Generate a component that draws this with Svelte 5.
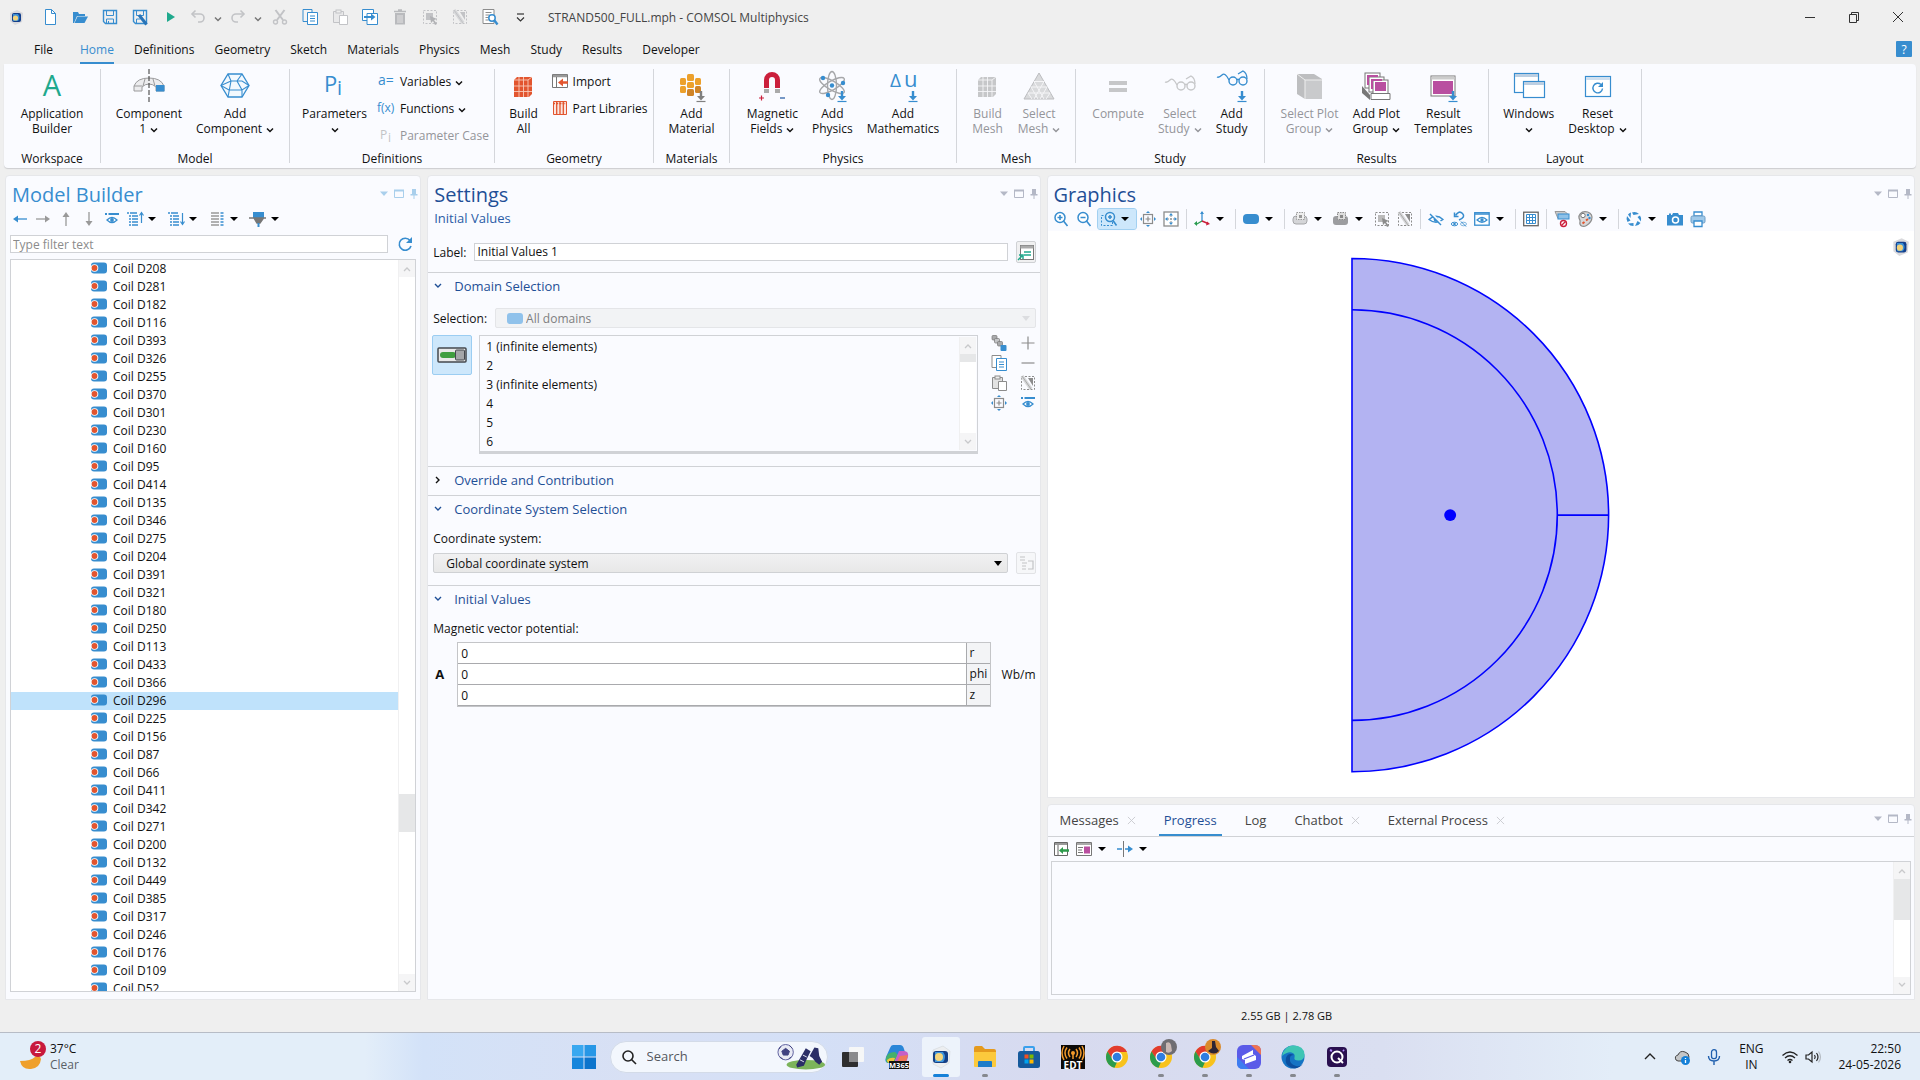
<script lang="ts">
	const B = '#378dcf';
	const G = '#8c8c8c';
	const L = '#c2c3c6';

	// 16x16 toolbar icons
	const icons: Record<string, string> = {
		logo: `<path d="M2 4 L9 1 L15 4 L14 13 L7 16 L2 12Z" fill="#d9d9dc"/><rect x="4" y="4" width="9" height="9" rx="2" fill="#123f8c"/><path d="M5 5h5q3 3.500 0 7H5z" fill="#3b8fd6"/><circle cx="7.500" cy="9" r="2.600" fill="#f3d37a"/>`,
		new: `<path d="M3.5.5h6l4 4v11h-10z" fill="#fff" stroke="${B}"/><path d="M9.5.5v4h4" fill="none" stroke="${B}"/>`,
		open: `<path d="M1 14V3h5l1 2h6v2H5L2 14z" fill="${B}"/><path d="M5.500 7.500H16L12.500 14H2.500z" fill="${B}"/>`,
		save: `<path d="M1.500 1.500h13v13h-11l-2-2z" fill="none" stroke="${B}" stroke-width="1.400"/><path d="M4.500 1.500v5h7v-5M4.500 14v-4h7v4M6.500 12v2" fill="none" stroke="${B}"/>`,
		saveas: `<path d="M1.500 1.500h13v13h-11l-2-2z" fill="none" stroke="${B}" stroke-width="1.400"/><path d="M4.500 1.500v5h7v-5M4.500 14v-4h4" fill="none" stroke="${B}"/><path d="M7 6l7.500 9.500" stroke="#2874b8" stroke-width="3"/>`,
		play: `<path d="M5 3l8 5-8 5z" fill="#1fa98d"/>`,
		undo: `<path d="M2 5h8a4 4 0 010 8H8" fill="none" stroke="${L}" stroke-width="1.600"/><path d="M5.500 1.500L2 5l3.500 3.500" fill="none" stroke="${L}" stroke-width="1.600"/>`,
		redo: `<path d="M14 5H6a4 4 0 000 8h2" fill="none" stroke="${L}" stroke-width="1.600"/><path d="M10.500 1.500L14 5l-3.500 3.500" fill="none" stroke="${L}" stroke-width="1.600"/>`,
		cut: `<path d="M3.500 1L11 11M12.500 1L5 11" stroke="${L}" stroke-width="2"/><circle cx="3.500" cy="13" r="2" fill="none" stroke="${L}" stroke-width="1.400"/><circle cx="12.500" cy="13" r="2" fill="none" stroke="${L}" stroke-width="1.400"/>`,
		copy: `<path d="M1 .5h9v12H1z" fill="#f4f4f4" stroke="${B}"/><path d="M5.500 3.500h10v12h-10z" fill="#fff" stroke="${B}"/><path d="M8 7h5M8 9.500h5M8 12h5" stroke="${B}" stroke-width="1.200"/>`,
		copyg: `<path d="M1 .5h9v12H1z" fill="#fff" stroke="${G}"/><path d="M5.500 3.500h10v12h-10z" fill="#fff" stroke="${B}"/><path d="M8 7h5M8 9.500h5M8 12h5" stroke="${B}" stroke-width="1.200"/>`,
		paste: `<path d="M1.500 2.500h10v11h-10z" fill="#e9e9ea" stroke="${L}"/><rect x="4" y="1" width="5" height="3" fill="#eee" stroke="${L}"/><path d="M7.500 6.500h8v9h-8z" fill="#fff" stroke="${L}"/>`,
		pasteg: `<path d="M1.500 2.500h10v11h-10z" fill="#e2e2e2" stroke="${G}"/><rect x="4" y="1" width="5" height="3" fill="#eee" stroke="${G}"/><path d="M7.500 6.500h8v9h-8z" fill="#fff" stroke="${G}"/>`,
		dup: `<path d="M.5.500h11v11H.5z" fill="#fff" stroke="${B}"/><path d="M5 4.500h10.500v11H5z" fill="#fff" stroke="${B}"/><path d="M2 8h8" stroke="${B}" stroke-width="2"/><path d="M9 4.500L13.500 8 9 11.500z" fill="${B}"/>`,
		trash: `<path d="M3 4h10v11.500H3z" fill="#b9babd"/><path d="M2 2.500h12M6 1h4" stroke="#b9babd" stroke-width="1.500"/><path d="M6 6v8M8 6v8M10 6v8" stroke="#eee" stroke-width=".8"/>`,
		sel: `<rect x="1.500" y="1.500" width="13" height="13" fill="none" stroke="${L}" stroke-dasharray="2 1.500"/><rect x="4" y="4" width="7" height="7" fill="${L}"/><path d="M8 7l7 3-3 1 3 4-2 1-2-4-2 2z" fill="#b0b1b4"/>`,
		selg: `<rect x="1.500" y="1.500" width="13" height="13" fill="none" stroke="${G}" stroke-dasharray="2 1.500"/><rect x="4" y="4" width="7" height="7" fill="#bbb"/><path d="M8 7l7 3-3 1 3 4-2 1-2-4-2 2z" fill="${G}"/>`,
		desel: `<rect x="1.500" y="1.500" width="13" height="13" fill="none" stroke="${L}" stroke-dasharray="2 1.500"/><path d="M8 3h5v8z" fill="${L}"/><path d="M2 1l9 13" stroke="#d6d7d9" stroke-width="3.500"/><path d="M2 1l9 13" stroke="${L}"/>`,
		deselg: `<rect x="1.500" y="1.500" width="13" height="13" fill="none" stroke="${G}" stroke-dasharray="2 1.500"/><path d="M8 3h5v8z" fill="${G}"/><path d="M2 1l9 13" stroke="#d6d7d9" stroke-width="3.500"/><path d="M2 1l9 13" stroke="#aaa"/>`,
		find: `<path d="M1 .5h11v14H1z" fill="#fff" stroke="${G}"/><path d="M3.500 3.500h6M3.500 6h4M3.500 8.500h3M3.500 11h3" stroke="${G}"/><circle cx="10" cy="9" r="3.200" fill="#fff" stroke="${B}" stroke-width="1.500"/><path d="M12.500 11.500l3 4" stroke="${B}" stroke-width="2.400"/>`,
		more: `<path d="M5 5h7" stroke="#333" stroke-width="1.200"/><path d="M5 8.500l3.500 3.500L12 8.500" fill="none" stroke="#333" stroke-width="1.200"/>`,
		left: `<path d="M15 8H4" stroke="${B}" stroke-width="1.300"/><path d="M6 4.500v7L1 8z" fill="${B}"/>`,
		right: `<path d="M1 8h11" stroke="#999" stroke-width="1.300"/><path d="M10 4.500v7l5-3.500z" fill="#999"/>`,
		up: `<path d="M8 15V4" stroke="#999" stroke-width="1.300"/><path d="M4.500 6h7L8 1z" fill="#999"/>`,
		down: `<path d="M8 1v11" stroke="#999" stroke-width="1.300"/><path d="M4.500 10h7L8 15z" fill="#999"/>`,
		eye: `<path d="M1 3h2M4.500 3H15" stroke="${B}" stroke-width="2"/><path d="M3 9q5-5 10 0-5 5-10 0z" fill="#fff" stroke="${B}" stroke-width="1.300"/><circle cx="8" cy="9" r="1.900" fill="${B}"/>`,
		listup: `<path d="M0 2h10M2 5h9M2 8h9M2 11h9M2 14h9" stroke="${B}" stroke-width="1.300" stroke-dasharray="2 1 9"/><path d="M14.500 12V2M12.500 4.500l2-3 2 3" fill="none" stroke="${B}" stroke-width="1.200"/>`,
		listdown: `<path d="M0 2h10M2 5h9M2 8h9M2 11h9M2 14h9" stroke="${B}" stroke-width="1.300" stroke-dasharray="2 1 9"/><path d="M14.500 2v11M12.500 10.500l2 3 2-3" fill="none" stroke="${B}" stroke-width="1.200"/>`,
		cols: `<path d="M2 2h8M2 5h8M2 8h8M2 11h8M2 14h8" stroke="#999" stroke-width="1.300"/><path d="M11.500 2h3M11.500 5h3M11.500 8h3M11.500 11h3M11.500 14h3" stroke="${B}" stroke-width="1.500"/>`,
		funnel: `<path d="M3 1h11v6H3z" fill="${B}"/><path d="M-1 7h17M4 7h9.500L10 12H7z" fill="#777" stroke="#777" stroke-width="1.500"/><path d="M8.500 12v4" stroke="${B}" stroke-width="2"/>`,
		refresh: `<path d="M13 4.500A6 6 0 1014 10" fill="none" stroke="${B}" stroke-width="1.600"/><path d="M15 1v6H9z" fill="${B}"/>`,
		coil: `<rect x="0" y="2.500" width="16" height="11" rx="3" fill="${B}"/><circle cx="3.500" cy="8" r="3.800" fill="#fff"/><circle cx="3.500" cy="8" r="2.900" fill="#e2552f"/>`,
		zoomin: `<circle cx="7" cy="6.500" r="5" fill="#fff" stroke="${B}" stroke-width="1.500"/><path d="M4.500 6.500h5M7 4v5M10.500 10l4 5" stroke="${B}" stroke-width="1.600"/>`,
		zoomout: `<circle cx="7" cy="6.500" r="5" fill="#fff" stroke="${B}" stroke-width="1.500"/><path d="M4.500 6.500h5M10.500 10l4 5" stroke="${B}" stroke-width="1.600"/>`,
		zoombox: `<rect x=".5" y="4.500" width="11" height="10" fill="none" stroke="${B}" stroke-dasharray="2 1.500"/><circle cx="9" cy="6" r="4.500" fill="#dceefb" stroke="${B}" stroke-width="1.500"/><path d="M7 6h4M9 4v4M12 9.500l3.500 5" stroke="${B}" stroke-width="1.600"/>`,
		center: `<rect x="3.500" y="3.500" width="9" height="9" fill="none" stroke="${G}" stroke-width="1.200"/><path d="M8 5.500v5M5.500 8h5" stroke="${G}" stroke-width="1.200"/><path d="M8 0l2 2H6zM8 16l2-2H6zM0 8l2-2v4zM16 8l-2-2v4z" fill="${B}"/>`,
		extents: `<rect x="1" y="1" width="14" height="14" fill="#fff" stroke="${G}" stroke-width="1.300"/><path d="M8 4v8M4 8h8" stroke="${G}" stroke-dasharray="2 1"/><path d="M8 2l2 2.500H6zM8 14l2-2.500H6zM2 8l2.500-2v4zM14 8l-2.500-2v4z" fill="${B}"/>`,
		axes: `<path d="M8 1v9" stroke="${B}" stroke-width="1.300"/><path d="M8 10l-6 3.500" stroke="#2a9c50" stroke-width="1.400"/><path d="M8 10l6 2.500" stroke="#cb1f3b" stroke-width="1.400"/><path d="M8 0l2 3H6z" fill="${B}"/><path d="M0 12.500l3-2.500v5z" fill="#2a9c50"/><path d="M16 13l-4 1.500 1-4z" fill="#cb1f3b"/>`,
		blob: `<rect x="0" y="3" width="16" height="10" rx="4" fill="${B}"/>`,
		select1: `<rect x="1" y="5" width="14" height="8" rx="3" fill="#d4d5d8" stroke="#a5a6a9"/><rect x="4.500" y="1.500" width="8" height="7" fill="#eee" stroke="#999" stroke-dasharray="1.500 1"/><rect x="7" y="4" width="3" height="3" fill="#999"/>`,
		select2: `<rect x="0" y="5" width="15" height="9" rx="3" fill="#9c9da0"/><rect x="4.500" y="1.500" width="8" height="7" fill="#ddd" stroke="#888" stroke-dasharray="1.500 1"/><rect x="7" y="4" width="3" height="3" fill="#888"/>`,
		hide: `<path d="M1 8.500q7-6.500 14 0-7 5.500-14 0z" fill="none" stroke="${B}" stroke-width="1.300"/><circle cx="8" cy="8.500" r="2.300" fill="${B}"/><path d="M3.500 2.500l11 11" stroke="#fafbff" stroke-width="2"/><path d="M2 3l11 11" stroke="${B}" stroke-width="1.400"/>`,
		reset: `<path d="M3.500 1.500v4h4" fill="none" stroke="${B}" stroke-width="1.500"/><path d="M4.500 4.500Q8-1 11.500 2.500T8 9" fill="none" stroke="${B}" stroke-width="1.600"/><ellipse cx="3.500" cy="13" rx="3.200" ry="1.800" fill="none" stroke="${B}"/><circle cx="3.500" cy="13" r="1.300" fill="${B}"/><ellipse cx="12.500" cy="13" rx="3" ry="1.800" fill="none" stroke="#7fb4de"/><path d="M10 10.500l5 5" stroke="${B}"/>`,
		view: `<rect x=".700" y="1.700" width="14.500" height="12.500" fill="#fff" stroke="${B}" stroke-width="1.300"/><path d="M1 3h14" stroke="${B}" stroke-width="1.500"/><path d="M3 9q5-5 10 0-5 4.500-10 0z" fill="none" stroke="${B}" stroke-width="1.200"/><circle cx="8" cy="9" r="1.700" fill="${B}"/>`,
		grid: `<rect x=".700" y="1.200" width="14.500" height="13.500" fill="#fff" stroke="#666" stroke-width="1.300"/><path d="M3.500 3.500h9v9h-9zM3.500 6.500h9M3.500 9.500h9M6.500 3.500v9M9.500 3.500v9" fill="none" stroke="${B}"/>`,
		noclip: `<path d="M1 .5h10l3 3v4H4z" fill="#c9cacc" stroke="#999"/><rect x="4" y="3" width="11" height="5" fill="#8ec1e8" stroke="${B}"/><circle cx="9.500" cy="12.500" r="3" fill="#fff" stroke="#cb1f3b" stroke-width="1.400"/><path d="M7.500 14.500l4-4" stroke="#cb1f3b" stroke-width="1.300"/>`,
		palette: `<path d="M8 .700c-4 0-6.500 3-6 6.300.5 2 1.500 2 1 4-1 4 3 5.500 6.500 3.500S15 9 15 6 12 .700 8 .700z" fill="#d7d7d9" stroke="${G}" stroke-width="1.200"/><circle cx="6" cy="4.500" r="2.200" fill="#fff" stroke="#777"/><circle cx="11" cy="4" r="1.200" fill="${B}"/><circle cx="12.500" cy="7" r="1.200" fill="${B}"/><path d="M5.500 12.500l2-1.500M9 9.500l2-1.500" stroke="#e2552f" stroke-width="2"/>`,
		aperture: `<path d="M6 1.500A7 7 0 0113 3l-5.500 1zM14 4.500a7 7 0 011 6l-3.500-4.500zM14.500 12a7 7 0 01-5.500 3l2.500-5zM7.500 15A7 7 0 012 12.500l5.500-.5zM1.500 11a7 7 0 01-.5-6l3.500 4.500zM2 3.500A7 7 0 015 1.500L4.500 7z" fill="${B}"/>`,
		camera: `<path d="M0 4h2V2.500h2V4h1l1-2h5l1 2h4v10.500H0z" fill="${B}"/><circle cx="8.500" cy="9" r="3" fill="${B}" stroke="#fff" stroke-width="1.500"/>`,
		printer: `<path d="M4 1h8v4H4z" fill="#fff" stroke="${B}" stroke-width="1.300"/><rect x="1" y="5" width="14" height="7" rx="1.500" fill="#9fc9ea" stroke="#6d9cc4"/><path d="M4 10h8v5.500H4z" fill="#fff" stroke="${B}" stroke-width="1.300"/>`,
		chain: `<g stroke="#777" stroke-width=".700"><rect x="1" y=".5" width="5" height="4.500" rx="1" fill="#a9aaac"/><rect x="3.500" y="3.500" width="5" height="4.500" rx="1" fill="#c3c4c6"/><rect x="6.500" y="6.500" width="5" height="4.500" rx="1" fill="#a9aaac"/></g><rect x="9.500" y="10" width="6" height="6" rx="1" fill="${B}"/>`,
		plus: `<path d="M8 1.500v13M1.500 8h13" stroke="${G}" stroke-width="1.200"/>`,
		minus: `<path d="M1.500 8h13" stroke="${G}" stroke-width="1.200"/>`,
		form: `<rect x="2.500" y="1.500" width="13" height="14" fill="#fff" stroke="#777"/><path d="M2.500 3h13" stroke="#aaa" stroke-width="3"/><path d="M6 8h7M6 11h7" stroke="#1fa98d" stroke-width="1.300"/><path d="M0 16l4-4M1 11h4v4" stroke="#1fa98d" fill="none" stroke-width="1.500"/>`,
		gotosrc: `<path d="M2 2h5M2 5h5M4 8h5M4 11h4M4 14h4M10 6h5v8h-5" fill="none" stroke="${L}" stroke-width="1.200"/>`,
		msg1: `<path d="M1.500 1.500h13v13h-13z" fill="#fff" stroke="#666"/><path d="M2 3h12" stroke="#999" stroke-width="2"/><path d="M5 4v10" stroke="#666"/><path d="M16 9.500H9" stroke="#2c9a4b" stroke-width="2.500"/><path d="M6 9.500L10 6v7z" fill="#2c9a4b"/>`,
		msg2: `<path d="M.5 1.500h15v13H.5z" fill="#fff" stroke="#777"/><path d="M1 3h14" stroke="#aaa" stroke-width="2"/><path d="M2 6.500h5M2 9h4M2 11.500h5" stroke="#777"/><rect x="8" y="5.500" width="6" height="7" fill="#b94fa0"/>`,
		msg3: `<path d="M6.500 0v16" stroke="#777"/><path d="M0 8h5M8 8h5" stroke="${B}" stroke-width="1.400"/><path d="M11 4.500v7l5-3.500z" fill="${B}"/>`,
		import: `<path d="M.5 1.500h15v13H.5z" fill="#fff" stroke="#777"/><path d="M1 3h14" stroke="#999" stroke-width="2.500"/><path d="M4.500 4v10" stroke="#777"/><path d="M16 9.500h-6" stroke="#e2552f" stroke-width="2.500"/><path d="M6 9.500L11 5.500v8z" fill="#e2552f"/>`,
		parts: `<path d="M1.500 1.500h13v13h-13z" fill="#fbe6e0" stroke="#e2552f"/><path d="M4.700 1v14M8 1v14M11.300 1v14" stroke="#e2552f" stroke-width="1.300"/><path d="M1 3.500h14" stroke="#e2552f" stroke-dasharray="2 1.200" stroke-width="1.500"/>`,
		vars: `<text x="-1" y="12" font-size="14" fill="${B}">a=</text>`,
		funcs: `<text x="-2" y="12" font-size="12" fill="${B}">f(x)</text>`,
		pcase: `<text x="1" y="12" font-size="12" fill="${L}">P</text><text x="9" y="15" font-size="12" fill="${L}">i</text>`
	};

	const downArrow = (c: string) => `<path d="M26 22v7" stroke="${c}" stroke-width="2.400"/><path d="M22 27h8l-4 4.500z" fill="${c}"/><path d="M21.500 32.500h9" stroke="${c}" stroke-width="1.200"/>`;
	const cube = (c: string, s: string) => `<path d="M6 11l3-3h15v17l-3 3H6z" fill="${c}"/><path d="M6 11h14v17M20 11l4-3M11 8v20M15.500 8v20M6 17h18M6 22.500h18" fill="none" stroke="${s}" stroke-width=".9"/>`;
	const glasses = (c: string) => `<circle cx="17" cy="17" r="4" fill="none" stroke="${c}" stroke-width="1.400"/><circle cx="27" cy="17" r="4" fill="none" stroke="${c}" stroke-width="1.400"/><path d="M21 16q1-1.500 2 0M13 16Q9 8 6 11t-5 2M31 15q0-6-4-8l-5 3" fill="none" stroke="${c}" stroke-width="1.300"/>`;

	// 32x34 ribbon icons
	const bigIcons: Record<string, string> = {
		app: `<text x="16" y="27" font-size="29" text-anchor="middle" fill="#1fa98d">A</text>`,
		comp: `<path d="M1 21v-4Q4 9 16 9t15 8v5h-8v-4q-3-3-7-3t-7 3v4H1z" fill="#ececee" stroke="#9a9a9c"/><path d="M1 17h8M12 10l-2 7M20 10l2 7" stroke="#9a9a9c" fill="none"/><rect x="23" y="16" width="8.500" height="6.500" fill="${B}"/><path d="M16 0v33" stroke="#333" stroke-dasharray="5 2"/>`,
		addcomp: `<path d="M9 5h14l7 11.500L23 28H9L2 16.500z" fill="#f3f9fe" stroke="${B}" stroke-width="1.300"/><path d="M9 5l3 7h11l7 4.500M12 12L2 16.500M12 12l-3 16M23 5l-5 7 5 9v7M2 16.500l8 4.500h13l7-4.500" fill="none" stroke="${B}" stroke-width="1.100"/>`,
		params: `<text x="6" y="23" font-size="22" fill="${B}">P</text><text x="19" y="26" font-size="20" fill="${B}">i</text>`,
		build: cube('#e2552f', '#f8c9b8'),
		mat: `<g fill="#eca02c"><rect x="12" y="5" width="7" height="7" rx="1.500"/><rect x="5" y="9" width="6" height="7" rx="1.500"/><rect x="20" y="9" width="6" height="7" rx="1.500"/><rect x="12" y="13" width="7" height="6" rx="1.500"/><rect x="5" y="17" width="6" height="7" rx="1.500"/></g><rect x="12" y="20" width="7" height="7" rx="1.500" fill="#d08428"/><rect x="20" y="17" width="6" height="7" rx="1.500" fill="#d08428"/>${downArrow('#808080')}`,
		magnet: `<path d="M8 19v-8a8 8 0 0116 0v8h-5v-8a3 3 0 00-6 0v8z" fill="#cb1f3b"/><path d="M8 20h5v4H8zM19 20h5v4h-5z" fill="#aaa"/><path d="M3 29h5M5.500 26.500v5" stroke="#cb1f3b" stroke-width="1.200"/><path d="M24 29h5" stroke="#2f62a8" stroke-width="1.300"/>`,
		atom: `<g fill="none" stroke="#a6a7aa" stroke-width="1.400"><ellipse cx="16" cy="16.500" rx="4.500" ry="14"/><ellipse cx="16" cy="16.500" rx="4.500" ry="14" transform="rotate(60 16 16.500)"/><ellipse cx="16" cy="16.500" rx="4.500" ry="14" transform="rotate(-60 16 16.500)"/></g><circle cx="16" cy="16.500" r="2.200" fill="${B}"/><circle cx="7" cy="9" r="2.200" fill="${B}"/><circle cx="27" cy="14" r="2.200" fill="${B}"/><circle cx="12" cy="26" r="2.200" fill="${B}"/>${downArrow(B)}`,
		math: `<text x="3" y="18" font-size="19" fill="${B}">Δ</text><text x="17" y="18" font-size="22" fill="${B}">u</text>${downArrow(B)}`,
		mesh: cube('#c6c7c9', '#f5f5f7'),
		smesh: `<path d="M16 4L31 30H1z" fill="#d9dadc" stroke="#bcbdc0"/><path d="M11 12.500h10M8 18h16M5 24h22M11 12.500l10 17.500M21 12.500L11 30M8 18l7 12M24 18l-7 12M5 24l4 6M27 24l-4 6" fill="none" stroke="#f5f5f7"/>`,
		compute: `<path d="M7 14h18M7 21h18" stroke="#c6c7c9" stroke-width="4"/>`,
		sstudy: glasses('#c6c7c9'),
		astudy: `<g transform="translate(0 -5)">${glasses(B)}</g>${downArrow(B)}`,
		splot: `<path d="M3 5h17l8 5v20H11l-8-5z" fill="#bdbec0"/><path d="M11 11h17v19H11z" fill="#c9cacc"/><path d="M3 5l8 6h17M11 11v19" fill="none" stroke="#eee"/>`,
		aplot: `<path d="M2 17l8 9v5l-8-7z" fill="#777"/><g fill="#fff" stroke="#777"><rect x="5" y="4" width="15" height="15"/><rect x="9" y="8" width="15" height="15"/><rect x="13" y="11" width="15" height="15"/><path d="M11 24.500h19v6H11z"/></g><path d="M7 6h11v2H9v8H7zM11 10h11v2h-9v8h-2zM15 13h11v9H15z" fill="#b94fa0"/>`,
		rtemp: `<rect x="4" y="7" width="24" height="20" fill="#fff" stroke="#777"/><path d="M4.500 9h23" stroke="#ccc" stroke-width="3"/><rect x="6" y="12" width="20" height="13" fill="#b94fa0"/>${downArrow(B)}`,
		windows: `<rect x="1.500" y="4.500" width="24" height="19" fill="#fff" stroke="${B}" stroke-width="1.200"/><path d="M2 6.500h23" stroke="#bccfe2" stroke-width="3"/><rect x="10.500" y="12.500" width="21" height="16" fill="#fff" stroke="${B}" stroke-width="1.200"/><path d="M11 14.500h20" stroke="#bccfe2" stroke-width="3"/>`,
		rdesk: `<rect x="3.500" y="7.500" width="25" height="20" fill="#fff" stroke="${B}" stroke-width="1.200"/><path d="M4 9.500h24" stroke="#cfe0f0" stroke-width="3"/><path d="M19 15.500a4.800 4.800 0 101.500 4" fill="none" stroke="${B}" stroke-width="1.400"/><path d="M21 13v5h-5z" fill="${B}"/>`
	};

	const chrome = `<circle cx="12" cy="12" r="11" fill="#f8c21c"/><path d="M2.500 6.500A11 11 0 0122 7H12l-4.500 8z" fill="#e23c2e"/><path d="M2.500 6.500L8 15l4 2-2.500 5.800A11 11 0 012.500 6.500z" fill="#2c9c4c"/><circle cx="12" cy="12" r="5.500" fill="#fff"/><circle cx="12" cy="12" r="4.300" fill="#2f7de0"/>`;

	// 24x24 taskbar icons
	const apps = [
		{ name: 'Task View', svg: `<rect x="8" y="2" width="15" height="15" rx="1" fill="#f6f7f7"/><rect x="1" y="7" width="16" height="15" rx="1" fill="#2e2e2f"/><path d="M8 7h9v10H8z" fill="#8a8a8c"/>` },
		{ name: 'M365 Copilot', svg: `<path d="M8 0h7q3 0 4 4l1 3-7 3-5 8H4q-5 0-3-6L5 3q1-3 3-3z" fill="#2a86d8"/><path d="M1 13q1-6 9-6l3 3-4 8H4q-4 0-3-5z" fill="#45b06c"/><path d="M2 15q3-3 8-2l-2 5H5q-3 0-3-3z" fill="#f0c43a"/><path d="M14 6h5q5 0 4 6l-2 6H9z" fill="#c65fc8"/><path d="M15 11l8-1-2 7h-9z" fill="#ee7a5a"/><rect x="4" y="16" width="20" height="8" fill="#111"/><text x="14" y="23" font-size="7.500" font-weight="700" text-anchor="middle" fill="#fff">M365</text>` },
		{ name: 'COMSOL Multiphysics', active: true, svg: `<path d="M4 5L14 1l7 5-1 12-8 5-8-4z" fill="#eceef0" stroke="#d3d6da" stroke-width=".6"/><rect x="4" y="6" width="15" height="12" rx="3" fill="#143f86"/><path d="M6 7h8q4 5 0 10H6z" fill="#3d94dc"/><circle cx="10" cy="12" r="4" fill="#f5d57b"/>` },
		{ name: 'File Explorer', run: true, svg: `<path d="M1 3q0-2 2-2h6l3 3h9q2 0 2 2v4H1z" fill="#e59a1d"/><path d="M1 7h22v14q0 1-1 1H2q-1 0-1-1z" fill="#fcc93c"/><path d="M5 22v-5q0-1 1-1h12q1 0 1 1v5z" fill="#1d7cc9"/>` },
		{ name: 'Store', svg: `<path d="M7 7V3q0-1 1-1h8q1 0 1 1v4" fill="none" stroke="#3aa0ec" stroke-width="2"/><rect x="1" y="6" width="22" height="17" rx="2.500" fill="#155a9c"/><path d="M7.500 9.500h4v4h-4z" fill="#f25022"/><path d="M12.500 9.500h4v4h-4z" fill="#7fba00"/><path d="M7.500 14.500h4v4h-4z" fill="#00a4ef"/><path d="M12.500 14.500h4v4h-4z" fill="#ffb900"/>` },
		{ name: 'EDT', svg: `<rect width="24" height="24" fill="#0c0a08"/><circle cx="12" cy="8" r="2" fill="#f39a2b"/><path d="M12 9v5M9 4q-3 4 0 8M15 4q3 4 0 8M6 2.500q-4 5.500 0 11M18 2.500q4 5.500 0 11M3 1q-4 7 0 14M21 1q4 7 0 14" fill="none" stroke="#f39a2b" stroke-width="1.500"/><text x="12" y="23.500" font-size="10" font-weight="700" text-anchor="middle" fill="#fff">EDT</text>` },
		{ name: 'Chrome', svg: chrome },
		{ name: 'Chrome profile 1', run: true, svg: `${chrome}<circle cx="20" cy="2" r="8" fill="#6f6d72"/><path d="M17-2q4-2 5 2l1 6q-3 3-6 1z" fill="#c9b8b4"/>` },
		{ name: 'Chrome profile 2', run: true, svg: `${chrome}<circle cx="20" cy="2" r="8" fill="#d98a2c"/><path d="M19-4h3l1 6 3 4q-5 5-11 0l4-3z" fill="#2d2433"/>` },
		{ name: 'ClickUp', run: true, svg: `<rect x="0" y="0" width="24" height="24" rx="6" fill="#5b5be8"/><path d="M14 0h4q6 0 6 6v4z" fill="#ee7352"/><path d="M0 12l12 12H6q-6 0-6-6z" fill="#3d7df0"/><path d="M5 11L16 5v4l3 2v4L8 19v-4l-3-1z" fill="#fff"/><path d="M7 14l10-4" stroke="#5b5be8" stroke-width="1.200"/>` },
		{ name: 'Edge', run: true, svg: `<circle cx="12" cy="12" r="11.500" fill="#1574c4"/><path d="M1 11Q3 1 12 .5q11 0 11.500 9 0 6-6 6-5 0-4-3 1-4-3-5T1 11z" fill="#3fc5b4"/><path d="M9 13q-1 6 6 8 4 1 7-2-4 5-11 4-8-3-6-10 2-6 8-3-4 0-4 3z" fill="#0c4f9e"/>` },
		{ name: 'Q', run: true, svg: `<rect x="2" y="2" width="20" height="20" rx="4" fill="#2a1050"/><circle cx="12" cy="12" r="5.500" fill="none" stroke="#fff" stroke-width="2"/><path d="M13 13l5 5" stroke="#fff" stroke-width="2"/><path d="M5 5l2 1M18 5l1 1" stroke="#b58cff" stroke-width="2"/>` }
	];

	const menu = ['File', 'Home', 'Definitions', 'Geometry', 'Sketch', 'Materials', 'Physics', 'Mesh', 'Study', 'Results', 'Developer'];

	type Item = { icon: string; lines: string[]; drop?: boolean; off?: boolean };
	type Small = { icon: string; text: string; drop?: boolean; off?: boolean };
	type Group = { name: string; width: number; items: Item[]; small?: Small[] };

	const ribbon: Group[] = [
		{ name: 'Workspace', width: 97, items: [{ icon: 'app', lines: ['Application', 'Builder'] }] },
		{ name: 'Model', width: 189, items: [{ icon: 'comp', lines: ['Component', '1'], drop: true }, { icon: 'addcomp', lines: ['Add', 'Component'], drop: true }] },
		{
			name: 'Definitions', width: 205,
			items: [{ icon: 'params', lines: ['Parameters', ''], drop: true }],
			small: [{ icon: 'vars', text: 'Variables', drop: true }, { icon: 'funcs', text: 'Functions', drop: true }, { icon: 'pcase', text: 'Parameter Case', off: true }]
		},
		{
			name: 'Geometry', width: 159,
			items: [{ icon: 'build', lines: ['Build', 'All'] }],
			small: [{ icon: 'import', text: 'Import' }, { icon: 'parts', text: 'Part Libraries' }]
		},
		{ name: 'Materials', width: 76, items: [{ icon: 'mat', lines: ['Add', 'Material'] }] },
		{ name: 'Physics', width: 227, items: [{ icon: 'magnet', lines: ['Magnetic', 'Fields'], drop: true }, { icon: 'atom', lines: ['Add', 'Physics'] }, { icon: 'math', lines: ['Add', 'Mathematics'] }] },
		{ name: 'Mesh', width: 119, items: [{ icon: 'mesh', lines: ['Build', 'Mesh'], off: true }, { icon: 'smesh', lines: ['Select', 'Mesh'], drop: true, off: true }] },
		{ name: 'Study', width: 189, items: [{ icon: 'compute', lines: ['Compute', ''], off: true }, { icon: 'sstudy', lines: ['Select', 'Study'], drop: true, off: true }, { icon: 'astudy', lines: ['Add', 'Study'] }] },
		{ name: 'Results', width: 224, items: [{ icon: 'splot', lines: ['Select Plot', 'Group'], drop: true, off: true }, { icon: 'aplot', lines: ['Add Plot', 'Group'], drop: true }, { icon: 'rtemp', lines: ['Result', 'Templates'] }] },
		{ name: 'Layout', width: 153, items: [{ icon: 'windows', lines: ['Windows', ''], drop: true }, { icon: 'rdesk', lines: ['Reset', 'Desktop'], drop: true }] }
	];

	const coils = [208, 281, 182, 116, 393, 326, 255, 370, 301, 230, 160, 95, 414, 135, 346, 275, 204, 391, 321, 180, 250, 113, 433, 366, 296, 225, 156, 87, 66, 411, 342, 271, 200, 132, 449, 385, 317, 246, 176, 109, 52];
	let selected = $state(296);

	const domains = ['1 (infinite elements)', '2', '3 (infinite elements)', '4', '5', '6'];

	// "|" is a separator, a trailing "+" adds a drop-down arrow
	const modelTools = ['left', 'right', 'up', 'down', 'eye', 'listup+', 'listdown+', 'cols+', 'funnel+'];
	const graphicsTools = ['zoomin', 'zoomout', 'zoombox+', 'center', 'extents', '|', 'axes+', '|', 'blob+', '|', 'select1+', 'select2+', 'selg', 'deselg', '|', 'hide', 'reset', 'view+', '|', 'grid', '|', 'noclip', 'palette+', '|', 'aperture+', 'camera', 'printer'];
	const messageTools = ['msg1', 'msg2+', 'msg3+'];

	const tabs = [
		{ name: 'Messages', close: true },
		{ name: 'Progress' },
		{ name: 'Log' },
		{ name: 'Chatbot', close: true },
		{ name: 'External Process', close: true }
	];
	let tab = $state('Progress');

	let label = $state('Initial Values 1');
	let potential = $state([
		{ axis: 'r', value: '0' },
		{ axis: 'phi', value: '0' },
		{ axis: 'z', value: '0' }
	]);
</script>

{#snippet icon(name: string)}
	<svg class="icon" viewBox="0 0 16 16" aria-hidden="true">{@html icons[name]}</svg>
{/snippet}

{#snippet chevron()}
	<svg class="chevron" viewBox="0 0 8 6" aria-hidden="true"><path d="M1 1.500L4 4.500L7 1.500" /></svg>
{/snippet}

{#snippet tools(list: string[])}
	<div class="tools">
		{#each list as t}
			{#if t === '|'}
				<span class="sep"></span>
			{:else}
				<button class:on={t === 'zoombox+'} aria-label={t.replace('+', '')}>
					<span class="tool">{@render icon(t.replace('+', ''))}</span>
					{#if t.endsWith('+')}<span class="arrow"><svg viewBox="0 0 8 4"><path d="M0 0h8L4 4z" /></svg></span>{/if}
				</button>
			{/if}
		{/each}
	</div>
{/snippet}

{#snippet paneControls()}
	<div class="pane-controls">
		<button aria-label="Menu"><svg viewBox="0 0 10 10"><path d="M1 2.500h8L5 7z" fill="currentColor" /></svg></button>
		<button aria-label="Maximize"><svg viewBox="0 0 10 10"><path d="M.5 1.500h9v7h-9z" fill="none" stroke="currentColor" /><path d="M0 1.500h10" stroke="currentColor" stroke-width="2" /></svg></button>
		<button aria-label="Pin"><svg viewBox="0 0 10 10"><path d="M3 0h4v5h1.500v1.500h-7V5H3z" fill="currentColor" /><path d="M5 6v4" stroke="currentColor" /></svg></button>
	</div>
{/snippet}

{#snippet scrollbar(kind: string)}
	<div class="scrollbar {kind}">
		<span class="end"><svg viewBox="0 0 8 6"><path d="M1 5l3-3 3 3" /></svg></span>
		<span class="before"></span>
		<span class="thumb"></span>
		<span class="after"></span>
		<span class="end"><svg viewBox="0 0 8 6"><path d="M1 1l3 3 3-3" /></svg></span>
	</div>
{/snippet}

<div class="window">
	<header class="titlebar">
		<span class="app-logo">{@render icon('logo')}</span>
		{#each ['new', 'open', 'save', 'saveas', 'play'] as n}
			<button class="quick" aria-label={n}>{@render icon(n)}</button>
		{/each}
		{#each ['undo', 'redo'] as n}
			<button class="history" aria-label={n}>{@render icon(n)}</button>
			<button class="history-drop" aria-label="{n} list">{@render chevron()}</button>
		{/each}
		{#each ['cut', 'copy', 'paste', 'dup', 'trash', 'sel', 'desel', 'find', 'more'] as n}
			<button class="quick" aria-label={n}>{@render icon(n)}</button>
		{/each}
		<span class="title">STRAND500_FULL.mph - COMSOL Multiphysics</span>
		<div class="window-controls">
			<button aria-label="Minimize"><svg viewBox="0 0 12 12"><path d="M1 6.500h10" /></svg></button>
			<button aria-label="Restore"><svg viewBox="0 0 12 12"><path d="M1.500 3.500h7v8h-7zM3.500 3.500v-2h7v8h-2" /></svg></button>
			<button aria-label="Close"><svg viewBox="0 0 12 12"><path d="M1 1l10 10M11 1L1 11" /></svg></button>
		</div>
	</header>

	<nav class="menu">
		{#each menu as m}
			<button class:active={m === 'Home'}>{m}</button>
		{/each}
		<button class="help" aria-label="Help">?</button>
	</nav>

	<section class="ribbon">
		{#each ribbon as g}
			<div class="group" style="width: {g.width}px">
				<div class="group-items">
					{#each g.items as it}
						<button class="big" disabled={it.off}>
							<svg class="big-icon" viewBox="0 0 32 34" aria-hidden="true">{@html bigIcons[it.icon]}</svg>
							<span>{it.lines[0]}</span>
							<span>{it.lines[1]} {#if it.drop}{@render chevron()}{/if}</span>
						</button>
					{/each}
					{#if g.small}
						<div class="small-items">
							{#each g.small as s}
								<button class="small" disabled={s.off}>
									{@render icon(s.icon)}
									<span>{s.text} {#if s.drop}{@render chevron()}{/if}</span>
								</button>
							{/each}
						</div>
					{/if}
				</div>
				<div class="group-name">{g.name}</div>
			</div>
		{/each}
	</section>

	<main>
		<section class="panel model">
			<div class="panel-head">
				<h2>Model Builder</h2>
				{@render paneControls()}
			</div>
			{@render tools(modelTools)}
			<div class="filter">
				<input type="text" placeholder="Type filter text" aria-label="Filter" />
				<button aria-label="Refresh">{@render icon('refresh')}</button>
			</div>
			<div class="tree-box">
				<ul class="tree">
					{#each coils as c}
						<li class:selected={c === selected}>
							<button onclick={() => (selected = c)}>{@render icon('coil')}Coil D{c}</button>
						</li>
					{/each}
				</ul>
				{@render scrollbar('tree-scroll')}
			</div>
		</section>

		<section class="panel settings">
			<div class="panel-head">
				<h2>Settings</h2>
				{@render paneControls()}
			</div>
			<p class="subtitle">Initial Values</p>
			<div class="label-row">
				<label for="node-label">Label:</label>
				<input id="node-label" type="text" bind:value={label} />
				<button class="square" aria-label="Go to form">{@render icon('form')}</button>
			</div>

			<div class="section">
				<h3><svg class="twist" viewBox="0 0 8 6"><path d="M1 1l3 3 3-3" /></svg>Domain Selection</h3>
				<div class="section-body domain">
					<div class="select-row">
						<label for="selection">Selection:</label>
						<div class="combo off">
							<select id="selection" disabled><option>All domains</option></select>
							<svg class="domain-mark" viewBox="0 0 16 11"><rect width="16" height="11" rx="3" /></svg>
							<svg class="combo-arrow" viewBox="0 0 8 5"><path d="M0 0h8L4 5z" /></svg>
						</div>
					</div>
					<div class="domain-row">
						<button class="toggle" aria-label="Activate selection">
							<svg viewBox="0 0 30 16"><rect x="1" y="1" width="28" height="14" rx="1" fill="#e8e8e8" stroke="#44484e" stroke-width="1.500" /><rect x="3" y="5" width="16" height="6" rx="3" fill="#3f9e3f" /><rect x="18.500" y="3" width="9" height="10" rx="1" fill="#a4a6a9" stroke="#44484e" /></svg>
						</button>
						<div class="domain-list">
							<ul>
								{#each domains as d}<li>{d}</li>{/each}
							</ul>
							{@render scrollbar('domain-scroll')}
						</div>
						<div class="domain-tools">
							{#each ['chain', 'plus', 'copyg', 'minus', 'pasteg', 'deselg', 'center', 'eye'] as n}
								<button aria-label={n}>{@render icon(n)}</button>
							{/each}
						</div>
					</div>
				</div>
			</div>

			<div class="section">
				<h3 class="closed"><svg class="twist" viewBox="0 0 8 8"><path d="M2 1l3 3-3 3" /></svg>Override and Contribution</h3>
			</div>

			<div class="section">
				<h3><svg class="twist" viewBox="0 0 8 6"><path d="M1 1l3 3 3-3" /></svg>Coordinate System Selection</h3>
				<div class="section-body coord">
					<label for="coord">Coordinate system:</label>
					<div class="select-row">
						<div class="combo">
							<select id="coord"><option>Global coordinate system</option></select>
							<svg class="combo-arrow" viewBox="0 0 8 5"><path d="M0 0h8L4 5z" /></svg>
						</div>
						<button class="square off" disabled aria-label="Go to source">{@render icon('gotosrc')}</button>
					</div>
				</div>
			</div>

			<div class="section">
				<h3><svg class="twist" viewBox="0 0 8 6"><path d="M1 1l3 3 3-3" /></svg>Initial Values</h3>
				<div class="section-body">
					<p class="field-name">Magnetic vector potential:</p>
					<div class="vector">
						<b>A</b>
						<div class="vector-grid">
							{#each potential as p}
								<input id="a-{p.axis}" type="text" bind:value={p.value} />
								<label for="a-{p.axis}">{p.axis}</label>
							{/each}
						</div>
						<span>Wb/m</span>
					</div>
				</div>
			</div>
		</section>

		<div class="right">
			<section class="panel graphics">
				<div class="panel-head">
					<h2>Graphics</h2>
					{@render paneControls()}
				</div>
				{@render tools(graphicsTools)}
				<div class="canvas">
					<svg class="geometry" viewBox="0 0 260 518" aria-label="Geometry">
						<path d="M1 1.500A257.500 257.500 0 011 516.500Z" fill="#b3b3f2" />
						<path d="M1 53A206 206 0 011 465M207 259H258.500" />
						<circle cx="99.500" cy="259" r="6" />
					</svg>
					<span class="canvas-logo">{@render icon('logo')}</span>
				</div>
			</section>

			<section class="panel messages">
				<div class="tabs">
					{#each tabs as t}
						<button class:active={t.name === tab} onclick={() => (tab = t.name)}>
							{t.name}
							{#if t.close}<svg viewBox="0 0 10 10"><path d="M1 1l8 8M9 1L1 9" /></svg>{/if}
						</button>
					{/each}
					{@render paneControls()}
				</div>
				{@render tools(messageTools)}
				<div class="log">
					<div class="log-body"></div>
					{@render scrollbar('log-scroll')}
				</div>
			</section>
		</div>
	</main>

	<footer class="status">2.55 GB | 2.78 GB</footer>

	<div class="taskbar">
		<button class="weather">
			<svg viewBox="0 0 30 32"><path d="M1 20Q3 29 12 28T22 18Q20 12 16 16T1 20z" fill="#efa02c" /><circle cx="19" cy="8" r="8" fill="#c8193c" /><text x="19" y="12" font-size="12" text-anchor="middle" fill="#fff">2</text></svg>
			<span>37°C<br /><i>Clear</i></span>
		</button>

		<div class="task-center">
			<button class="task" aria-label="Start">
				<svg viewBox="0 0 24 24"><path d="M0 0h11.500v11.500H0z" fill="#39a8f0" /><path d="M12.500 0H24v11.500H12.500z" fill="#2797e6" /><path d="M0 12.500h11.500V24H0z" fill="#1686dc" /><path d="M12.500 12.500H24V24H12.500z" fill="#0c74cc" /></svg>
			</button>
			<label class="search">
				<svg class="lens" viewBox="0 0 16 16"><circle cx="7" cy="7" r="5" /><path d="M10.500 10.500L15 15" /></svg>
				<input type="text" placeholder="Search" />
				<svg class="sport" viewBox="0 0 50 28">
					<ellipse cx="30" cy="22" rx="20" ry="5" fill="#7cb45a" />
					<circle cx="9" cy="9" r="8" fill="#e8eaf4" stroke="#5a5c9c" />
					<path d="M9 5l4 3-1.500 4h-5L5 8zM2 6l2-3M13 2l3 3M3 14l3 2M12 16l3-2" fill="#3f4180" stroke="#3f4180" />
					<path d="M20 22l6-10 4-7 5 3-4 8-3 7-7 2z" fill="#2b2e66" />
					<path d="M34 13l5-9 4 1 1 8 3 6-3 3-4-3-3-4z" fill="#2b2e66" />
					<path d="M24 17l4 2M27 12l4 2" stroke="#e8eaf4" />
				</svg>
			</label>
			{#each apps as a}
				<button class="task" class:active={a.active} class:run={a.run} aria-label={a.name}>
					<svg viewBox="0 0 24 24">{@html a.svg}</svg>
				</button>
			{/each}
		</div>

		<div class="tray">
			<button aria-label="Hidden icons"><svg viewBox="0 0 16 16"><path d="M3 10l5-5 5 5" fill="none" stroke="#222" stroke-width="1.400" /></svg></button>
			<button aria-label="OneDrive"><svg viewBox="0 0 16 16"><path d="M2 11q-2-4 2-5 2-5 7-3 4 1 4 5l-2 4H4z" fill="#c4c6c8" stroke="#444" /><circle cx="11.500" cy="11.500" r="4.500" fill="#1580d8" /><path d="M11.500 11v3M11.500 9v1" stroke="#fff" stroke-width="1.300" /></svg></button>
			<button aria-label="Microphone"><svg viewBox="0 0 16 16"><rect x="5.500" y=".7" width="5" height="9" rx="2.500" fill="#dcebfa" stroke="#1f5fae" stroke-width="1.300" /><path d="M2.500 7q0 5 5.500 5t5.500-5M8 12v4" fill="none" stroke="#1f5fae" stroke-width="1.400" /></svg></button>
			<button class="lang">ENG<br />IN</button>
			<button class="net" aria-label="Network and volume">
				<svg viewBox="0 0 16 16"><path d="M.5 6.500q7.500-7 15 0M3 9q5-4.500 10 0M5.500 11.500q2.500-2 5 0" fill="none" stroke="#222" stroke-width="1.300" /><circle cx="8" cy="13" r="1.300" fill="#222" /></svg>
				<svg viewBox="0 0 16 16"><path d="M1 6h2.500L7 3v10L3.500 10H1z" fill="none" stroke="#222" stroke-width="1.200" /><path d="M9.500 6q1.500 2 0 4M11.500 4q3 4 0 8" fill="none" stroke="#222" stroke-width="1.200" /><path d="M13.500 2.500q4 5.500 0 11" fill="none" stroke="#b5bcc4" stroke-width="1.200" /></svg>
			</button>
			<button class="clock">22:50<br />24-05-2026</button>
		</div>
	</div>
</div>

<style>
	:global(body) {
		background: #efefef;
	}

	.window {
		height: 100vh;
		display: flex;
		flex-direction: column;
		font: 12px/15px 'Open Sans', 'Noto Sans', sans-serif;
		color: #111;
		background: #efefef;
		overflow: hidden;
	}

	.window :global(*) {
		box-sizing: border-box;
	}

	button {
		font: inherit;
		color: inherit;
		background: none;
		border: 0;
		padding: 0;
		margin: 0;
	}

	input,
	select {
		font: inherit;
		color: #111;
		min-width: 0;
		margin: 0;
	}

	h2,
	h3,
	p,
	ul {
		margin: 0;
		padding: 0;
		font-weight: 400;
		list-style: none;
	}

	svg {
		display: block;
		overflow: visible;
	}

	.icon {
		width: 16px;
		height: 16px;
		flex: none;
	}

	.chevron {
		display: inline-block;
		width: 8px;
		height: 6px;
		fill: none;
		stroke: currentColor;
		stroke-width: 1.5;
	}

	/* title bar */
	.titlebar {
		height: 34px;
		flex: none;
		display: flex;
		align-items: center;
	}

	.app-logo {
		width: 35px;
		padding-left: 8px;
	}

	.quick {
		width: 30px;
		display: flex;
		justify-content: center;
	}

	.history {
		width: 26px;
		padding-left: 5px;
	}

	.history-drop {
		width: 14px;
		color: #777;
	}

	.title {
		margin-left: 13px;
		color: #444;
	}

	.window-controls {
		display: flex;
		margin-left: auto;
	}

	.window-controls button {
		width: 44px;
		display: flex;
		justify-content: center;
	}

	.window-controls svg {
		width: 12px;
		height: 12px;
		fill: none;
		stroke: #333;
	}

	/* menu */
	.menu {
		height: 30px;
		flex: none;
		display: flex;
		gap: 20px;
		padding: 0 8px 0 34px;
	}

	.menu button {
		padding-top: 2px;
		border-bottom: 2px solid transparent;
	}

	.menu .active {
		color: #378dcf;
		border-color: #378dcf;
	}

	.menu .help {
		width: 16px;
		height: 16px;
		margin: 7px 0 0 auto;
		padding: 0;
		border: 0;
		color: #fff;
		background: #378dcf;
		border-radius: 1px;
	}

	.menu button:first-child {
		margin-right: 7px;
	}

	/* ribbon */
	.ribbon {
		height: 104px;
		flex: none;
		display: flex;
		margin: 0 4px;
		padding: 5px 0;
		background: #fafbff;
		border-radius: 0 4px 4px 4px;
		box-shadow: 0 1px 1px #cccdd0;
	}

	.group {
		display: flex;
		flex-direction: column;
		border-right: 1px solid #d4d6db;
	}

	.group-items {
		flex: 1;
		display: flex;
		justify-content: center;
		align-items: flex-start;
	}

	.group-name {
		height: 9px;
		text-align: center;
		line-height: 9px;
	}

	.big {
		display: flex;
		flex-direction: column;
		align-items: center;
		padding: 0 7px;
		white-space: nowrap;
	}

	.big span {
		height: 15px;
	}

	.big-icon {
		width: 32px;
		height: 34px;
		margin-bottom: 3px;
	}

	.group .chevron {
		margin-left: 1px;
	}

	button:disabled {
		color: #94959a;
	}

	.small-items {
		display: flex;
		flex-direction: column;
	}

	.small {
		display: flex;
		align-items: center;
		gap: 5px;
		height: 27px;
		padding: 0 0 3px 5px;
		white-space: nowrap;
	}

	/* panels */
	main {
		flex: 1;
		min-height: 0;
		display: grid;
		grid-template-columns: 416fr 613fr 868fr;
		gap: 6px;
		margin-top: 7px;
		padding: 0 5px;
	}

	.panel {
		display: flex;
		flex-direction: column;
		min-height: 0;
		min-width: 0;
		background: #fafbff;
		border: 1px solid #e6e7ea;
		border-radius: 4px 4px 0 0;
	}

	.panel-head {
		display: flex;
		justify-content: space-between;
		padding: 7px 0 0 6px;
	}

	h2 {
		font-size: 20px;
		line-height: 24px;
		color: #1f4f96;
	}

	.model h2 {
		color: #378dcf;
	}

	.pane-controls {
		display: flex;
		gap: 5px;
		padding: 6px 1px 0 0;
		color: #b4b8c6;
	}

	.model .pane-controls {
		color: #a9cfec;
	}

	.pane-controls svg {
		width: 10px;
		height: 10px;
	}

	.pane-controls button {
		height: 10px;
	}

	.tools {
		height: 24px;
		flex: none;
		display: flex;
		align-items: center;
		padding-left: 2px;
	}

	.tools button {
		display: flex;
		align-items: center;
		height: 20px;
	}

	.tool {
		width: 23px;
		display: flex;
		justify-content: center;
	}

	.arrow {
		width: 18px;
		padding-left: 2px;
	}

	.arrow svg {
		width: 8px;
		height: 4px;
	}

	.tools .on {
		width: 38px;
		margin: 0 1px 0 2px;
		background: #cde7fb;
		outline: 1px solid #a2d0f1;
		border-radius: 2px;
	}

	.on .arrow {
		padding-left: 0;
		width: 14px;
	}

	.sep {
		width: 1px;
		height: 20px;
		margin: 0 4px 0 3px;
		background: #d4d6db;
	}

	/* model builder */
	.filter {
		display: flex;
		align-items: center;
		height: 18px;
		margin: 4px 7px 6px 4px;
		gap: 9px;
	}

	.filter input {
		flex: 1;
		height: 18px;
		padding: 0 2px;
		background: #fff;
		border: 1px solid #d0d2d6;
	}

	input::placeholder {
		color: #8b8b8b;
	}

	.tree-box {
		flex: 1;
		min-height: 0;
		display: flex;
		margin: 0 4px 7px;
		background: #fff;
		border: 1px solid #d0d2d6;
	}

	.tree {
		flex: 1;
		overflow: hidden;
	}

	.tree li {
		height: 18px;
	}

	.tree .selected {
		background: #bfe2fb;
	}

	.tree button {
		display: flex;
		align-items: center;
		gap: 6px;
		width: 100%;
		height: 18px;
		padding: 0 0 2px 80px;
	}

	.scrollbar {
		width: 17px;
		display: flex;
		flex-direction: column;
		background: #fff;
		border-left: 1px solid #f0f0f1;
	}

	.end {
		height: 17px;
		flex: none;
		display: flex;
		align-items: center;
		justify-content: center;
		background: #f5f5f6;
	}

	.end svg {
		width: 8px;
		height: 6px;
		fill: none;
		stroke: #c8c9cb;
		stroke-width: 1.3;
	}

	.thumb {
		background: #e6e7e8;
	}

	.tree-scroll .before {
		flex: 518;
	}

	.tree-scroll .thumb {
		height: 38px;
	}

	.tree-scroll .after {
		flex: 142;
	}

	.domain-scroll .thumb {
		height: 8px;
	}

	.domain-scroll .after,
	.log-scroll .after {
		flex: 1;
	}

	.log-scroll .thumb {
		height: 41px;
	}

	/* settings */
	.subtitle {
		padding-left: 6px;
		font-size: 13px;
		line-height: 22px;
		color: #2a5ba6;
	}

	.label-row {
		display: flex;
		align-items: center;
		height: 22px;
		margin: 12px 4px 9px 5px;
		gap: 8px;
	}

	.label-row input {
		flex: 1;
		height: 18px;
		padding: 0 2px 1px;
		background: #fff;
		border: 1px solid #d0d2d6;
	}

	.square {
		width: 20px;
		height: 22px;
		display: flex;
		align-items: center;
		justify-content: center;
		background: #f0f0f1;
		border: 1px solid #cfd1d4;
		border-radius: 2px;
	}

	.square.off {
		border-color: #e2e3e6;
		background: #f6f7f9;
	}

	.section {
		border-top: 1px solid #d0d2d6;
	}

	h3 {
		display: flex;
		align-items: center;
		gap: 12px;
		height: 28px;
		padding: 0 0 2px 6px;
		font-size: 13px;
		color: #1f4f96;
	}

	.twist {
		width: 8px;
		height: 8px;
		fill: none;
		stroke: #1f4f96;
		stroke-width: 1.4;
	}

	.closed .twist {
		stroke: #111;
	}

	.section-body {
		padding: 6px 4px 11px 5px;
	}

	.section-body > label,
	.field-name {
		display: block;
		line-height: 18px;
	}

	.select-row {
		display: flex;
		align-items: center;
		gap: 8px;
	}

	.combo {
		flex: 1;
		display: grid;
		align-items: center;
	}

	.combo > * {
		grid-area: 1 / 1;
	}

	.combo select {
		appearance: none;
		height: 20px;
		padding: 0 12px;
		background: linear-gradient(#f1f1f2, #e8e8e8);
		border: 1px solid #cfd1d4;
		border-radius: 2px;
	}

	.combo.off select {
		padding-left: 30px;
		color: #7e7e80;
		background: #f2f3f5;
		border-color: #e4e5e8;
		opacity: 1;
	}

	.combo-arrow {
		width: 8px;
		height: 5px;
		justify-self: end;
		margin-right: 6px;
		pointer-events: none;
	}

	.off .combo-arrow {
		fill: #dcdde0;
	}

	.domain-mark {
		width: 16px;
		height: 11px;
		margin-left: 12px;
		fill: #90c2eb;
		pointer-events: none;
	}

	.domain {
		padding: 7px 4px 12px;
	}

	.domain label {
		padding-left: 1px;
	}

	.domain-row {
		display: flex;
		align-items: flex-start;
		height: 119px;
		margin-top: 7px;
	}

	.toggle {
		width: 40px;
		height: 40px;
		display: flex;
		align-items: center;
		justify-content: center;
		background: #cde7fb;
		border: 1px solid #9bcdf2;
		border-radius: 2px;
	}

	.toggle svg {
		width: 30px;
		height: 16px;
	}

	.domain-list {
		flex: 1;
		height: 119px;
		display: flex;
		margin: 0 10px 0 7px;
		padding: 1px;
		border: 1px solid #d0d2d6;
		border-bottom-width: 3px;
	}

	.domain-list ul {
		flex: 1;
	}

	.domain-list li {
		height: 19px;
		padding-left: 5px;
		line-height: 19px;
	}

	.domain-tools {
		display: grid;
		grid-template-columns: 16px 16px;
		gap: 4px 13px;
		padding-left: 3px;
	}

	.domain-tools button {
		height: 16px;
	}

	.coord .select-row {
		margin-top: 4px;
	}

	.vector {
		display: grid;
		grid-template-columns: 16px 1fr auto;
		align-items: center;
		gap: 8px;
		margin-top: 4px;
	}

	.vector b {
		font-size: 13px;
		padding-left: 2px;
	}

	.vector span {
		margin-left: 3px;
	}

	.vector-grid {
		display: grid;
		grid-template-columns: 1fr 24px;
		border: 1px solid #c4c5c8;
	}

	.vector-grid input,
	.vector-grid label {
		height: 21px;
		padding: 0 3px;
		line-height: 20px;
		background: #fff;
		border: 0;
		border-bottom: 1px solid #a9aaad;
	}

	.vector-grid label {
		background: #f3f4f6;
		border-left: 1px solid #a9aaad;
	}

	/* graphics */
	.right {
		display: grid;
		grid-template-rows: 624fr 196fr;
		gap: 6px;
		min-height: 0;
		min-width: 0;
	}

	.canvas {
		flex: 1;
		min-height: 0;
		display: flex;
		align-items: center;
		justify-content: center;
		padding: 26px 0 24px;
		background: #fff;
		position: relative;
	}

	.geometry {
		height: 100%;
		fill: none;
		stroke: #00f;
		stroke-width: 1.6;
	}

	.geometry circle {
		fill: #00f;
		stroke: none;
	}

	.canvas-logo {
		position: absolute;
		top: 6px;
		right: 4px;
	}

	.canvas-logo :global(.icon) {
		width: 19px;
		height: 19px;
	}

	.tabs {
		height: 32px;
		flex: none;
		display: flex;
		padding-left: 7px;
		font-size: 13px;
		border-bottom: 1px solid #d0d2d6;
	}

	.tabs > button {
		display: flex;
		align-items: center;
		gap: 8px;
		margin-right: 18px;
		padding: 1px 5px 0;
		color: #444;
		border-bottom: 2px solid transparent;
	}

	.tabs > .active {
		color: #1f4f96;
		border-color: #378dcf;
	}

	.tabs > button svg {
		width: 9px;
		height: 9px;
		fill: none;
		stroke: #c8cacf;
	}

	.tabs .pane-controls {
		margin-left: auto;
		padding-top: 9px;
	}

	.log {
		flex: 1;
		min-height: 0;
		display: flex;
		margin: 0 3px 4px;
		border: 1px solid #d0d2d6;
	}

	.log-body {
		flex: 1;
	}

	.status {
		height: 32px;
		flex: none;
		padding-left: 1241px;
		line-height: 32px;
		font-size: 11px;
	}

	/* taskbar */
	.taskbar {
		height: 48px;
		flex: none;
		display: grid;
		grid-template-columns: 1fr auto 1fr;
		align-items: center;
		border-top: 1px solid #b7bcc6;
		background: linear-gradient(90deg, #e3eef9 0 19%, #d3e2f8 22%, #d8e0f4 33%, #d4e0f7 42%, #d7daef 55%, #dadff1 72%, #e3edf8 84%);
	}

	.weather {
		display: flex;
		align-items: center;
		gap: 1px;
		padding-left: 19px;
		text-align: left;
		line-height: 16px;
	}

	.weather svg {
		width: 30px;
		height: 34px;
	}

	.weather i {
		font-style: normal;
		color: #5a5f66;
	}

	.task-center {
		display: flex;
		align-items: center;
	}

	.task {
		width: 44px;
		height: 40px;
		display: flex;
		flex-direction: column;
		align-items: center;
		justify-content: center;
	}

	.task svg {
		width: 24px;
		height: 24px;
	}

	.task.active {
		width: 38px;
		margin: 0 3px;
		background: #edf3fb;
		border-radius: 3px;
	}

	.task.run,
	.task.active {
		padding-top: 8px;
	}

	.run::after,
	.active.task::after {
		content: '';
		width: 6px;
		height: 3px;
		margin-top: 5px;
		background: #85888e;
		border-radius: 2px;
	}

	.active.task::after {
		width: 16px;
		background: #1580d8;
	}

	.search {
		width: 218px;
		height: 32px;
		display: flex;
		align-items: center;
		margin: 0 3px 0 4px;
		padding: 0 2px 0 10px;
		background: #f3f7fd;
		border: 1px solid #d3dbe8;
		border-radius: 16px;
	}

	.search input {
		flex: 1;
		padding: 0 0 0 10px;
		font-size: 13px;
		background: none;
		border: 0;
	}

	.search input::placeholder {
		color: #55585e;
	}

	.lens {
		width: 16px;
		height: 16px;
		fill: none;
		stroke: #222;
		stroke-width: 1.6;
	}

	.sport {
		width: 48px;
		height: 28px;
	}

	.tray {
		display: flex;
		align-items: center;
		justify-content: flex-end;
		padding-right: 19px;
		line-height: 16px;
	}

	.tray button {
		width: 32px;
		display: flex;
		justify-content: center;
	}

	.tray svg {
		width: 16px;
		height: 16px;
	}

	.tray .lang {
		width: 42px;
		display: block;
	}

	.tray .net {
		width: 58px;
		gap: 7px;
	}

	.tray .clock {
		width: auto;
		display: block;
		margin-left: 8px;
		text-align: right;
	}
</style>
